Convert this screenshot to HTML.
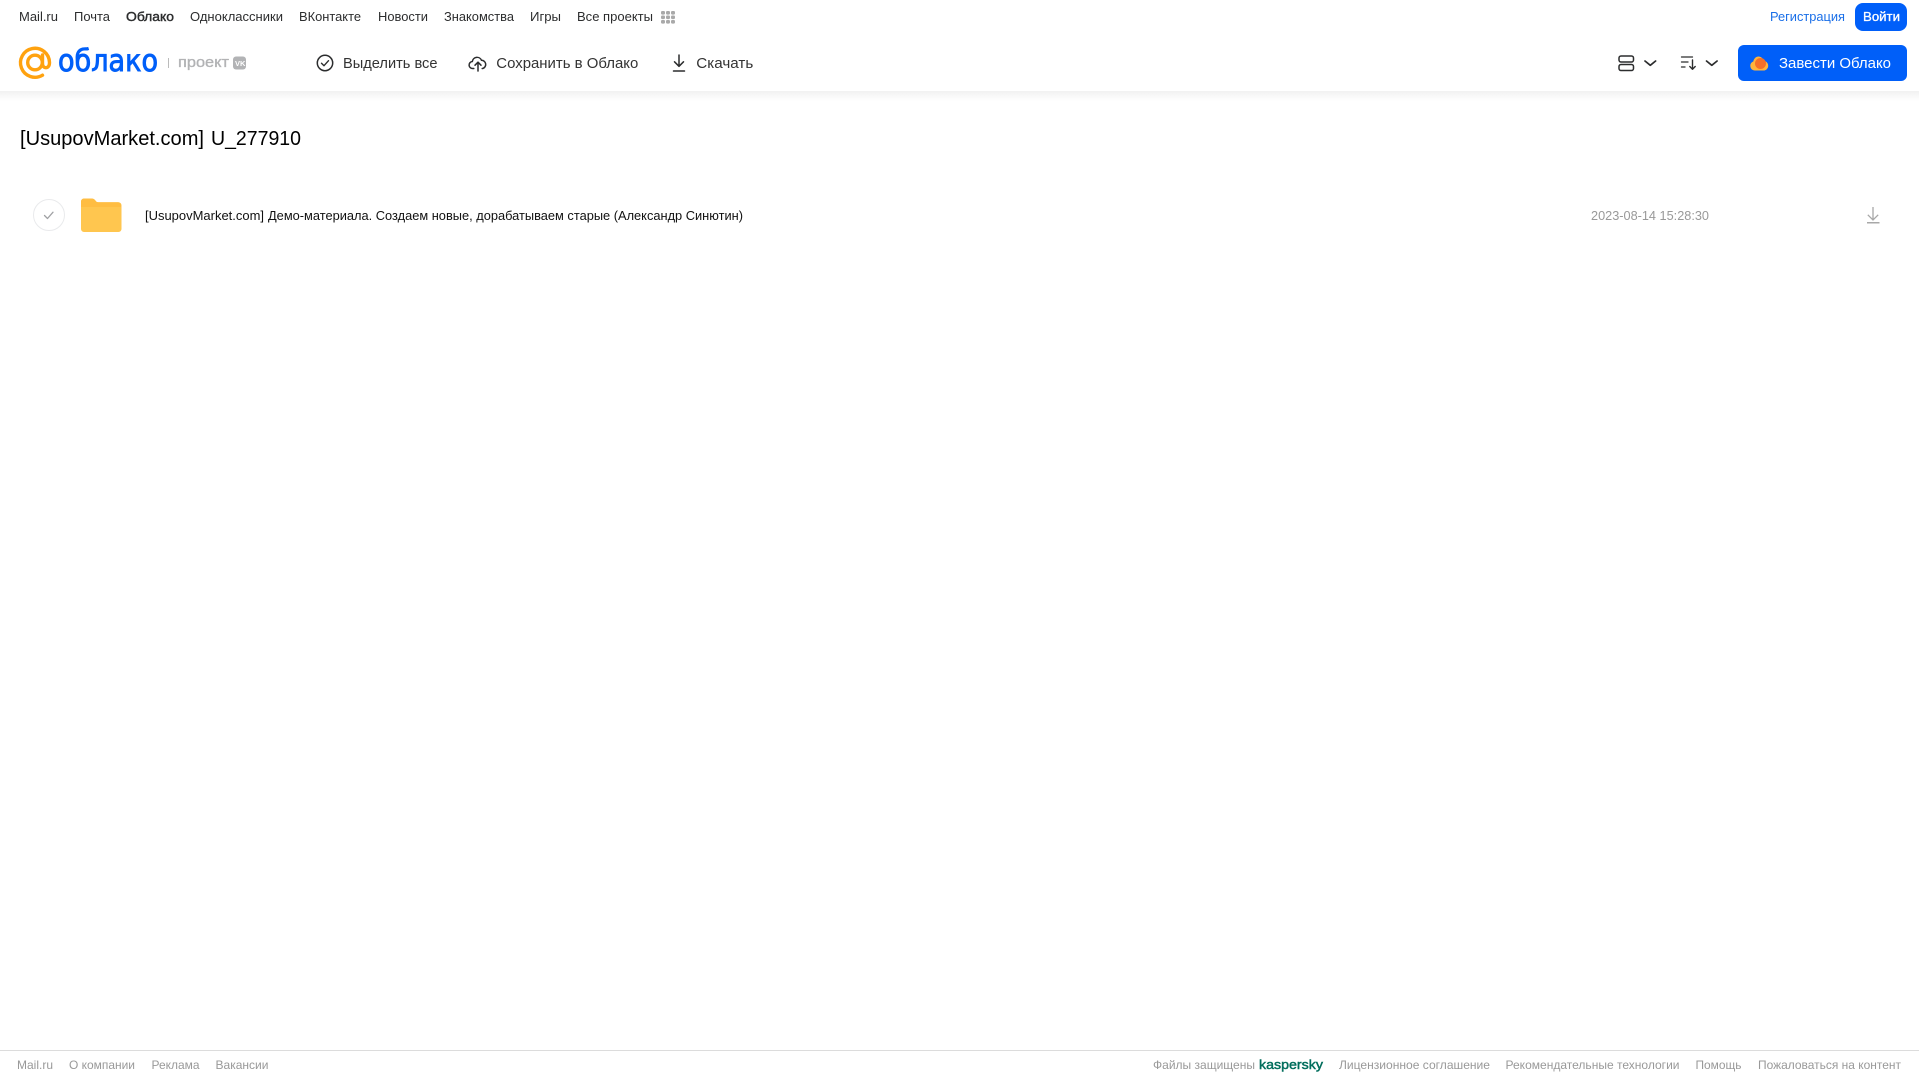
<!DOCTYPE html>
<html lang="ru"><head><meta charset="utf-8"><title>Облако</title>
<style>
html,body{margin:0;padding:0;background:#fff;width:1919px;height:1079px;overflow:hidden}
svg{display:block;position:absolute;left:0;top:0}
text{font-family:"Liberation Sans",sans-serif;fill:#2c2d2e}
.n{font-size:13px}
.t{font-size:15px;fill:#333}
.f{font-size:12px;fill:#999}
</style></head><body>
<svg width="1919" height="1079" viewBox="0 0 1919 1079" xmlns="http://www.w3.org/2000/svg">
<defs><linearGradient id="s" x1="0" y1="0" x2="0" y2="1"><stop offset="0" stop-color="#f1f1f1"/><stop offset="1" stop-color="#fff"/></linearGradient></defs>
<rect x="0" y="91" width="1919" height="10" fill="url(#s)"/>

<!-- top nav -->
<text class="n" x="19" y="21" textLength="39" lengthAdjust="spacingAndGlyphs">Mail.ru</text>
<text class="n" x="74" y="21" textLength="36" lengthAdjust="spacingAndGlyphs">Почта</text>
<text class="n" x="126" y="21" textLength="48" lengthAdjust="spacingAndGlyphs" style="stroke:#2c2d2e;stroke-width:.4">Облако</text>
<text class="n" x="190" y="21" textLength="93" lengthAdjust="spacingAndGlyphs">Одноклассники</text>
<text class="n" x="299" y="21" textLength="62" lengthAdjust="spacingAndGlyphs">ВКонтакте</text>
<text class="n" x="378" y="21" textLength="50" lengthAdjust="spacingAndGlyphs">Новости</text>
<text class="n" x="444" y="21" textLength="70" lengthAdjust="spacingAndGlyphs">Знакомства</text>
<text class="n" x="530" y="21" textLength="31" lengthAdjust="spacingAndGlyphs">Игры</text>
<text class="n" x="577" y="21" textLength="76" lengthAdjust="spacingAndGlyphs">Все проекты</text>
<g fill="#a9a9a9">
<rect x="661" y="11" width="4" height="3.6" rx="1.2"/><rect x="666" y="11" width="4" height="3.6" rx="1.2"/><rect x="671" y="11" width="4" height="3.6" rx="1.2"/>
<rect x="661" y="15.500" width="4" height="3.600" rx="1.200"/><rect x="666" y="15.500" width="4" height="3.600" rx="1.200"/><rect x="671" y="15.500" width="4" height="3.600" rx="1.200"/>
<rect x="661" y="20" width="4" height="3.600" rx="1.200"/><rect x="666" y="20" width="4" height="3.600" rx="1.200"/><rect x="671" y="20" width="4" height="3.600" rx="1.200"/>
</g>
<text class="n" x="1770" y="21" textLength="75" lengthAdjust="spacingAndGlyphs" style="fill:#1a6fe8">Регистрация</text>
<rect x="1855" y="3" width="52" height="28" rx="8" fill="#005ff9"/>
<text class="n" x="1863" y="21" textLength="37" lengthAdjust="spacingAndGlyphs" style="fill:#fff;stroke:#fff;stroke-width:.3">Войти</text>

<!-- logo -->
<circle cx="35" cy="62.500" r="7.300" fill="none" stroke="#ffa20f" stroke-width="3.400"/>
<path d="M42.500 75.200A14.500 14.500 0 1 1 49.500 62.500c0 3.500-1.600 5.200-3.600 5.200s-3.400-1.700-3.400-4.500V55" fill="none" stroke="#ffa20f" stroke-width="3.400" stroke-linecap="round" stroke-linejoin="round"/>
<text x="58" y="71" font-size="30" textLength="100" lengthAdjust="spacingAndGlyphs" style="fill:#005ff9;stroke:#005ff9;stroke-width:.9;font-family:'DejaVu Sans',sans-serif">облако</text>
<rect x="168" y="58" width="1" height="10" fill="#bbb"/>
<text x="178" y="67" font-size="15" textLength="51" lengthAdjust="spacingAndGlyphs" style="fill:#b2b3b5;stroke:#b2b3b5;stroke-width:.35">проект</text>
<rect x="233" y="56.500" width="13" height="13" rx="3" fill="#b2b3b5"/>
<text x="235" y="66" font-size="7.500" font-weight="bold" style="fill:#fff">VK</text>

<!-- toolbar -->
<circle cx="325" cy="63" r="7.700" fill="none" stroke="#2c2d2e" stroke-width="1.500"/>
<path d="M321.500 63.200l2.500 2.500 4.500-5" fill="none" stroke="#2c2d2e" stroke-width="1.400" stroke-linecap="round" stroke-linejoin="round"/>
<text class="t" x="343" y="68" textLength="94.500" lengthAdjust="spacingAndGlyphs">Выделить все</text>
<path d="M473.800 68.500h-.9a3.500 3.500 0 0 1-.6-7 4.800 4.800 0 0 1 9.200-1.200 4.200 4.200 0 0 1 1.300 8.200h-.6" fill="none" stroke="#2c2d2e" stroke-width="1.500" stroke-linecap="round" stroke-linejoin="round"/>
<path d="M478 71v-8.500M475 65.200l3-3 3 3" fill="none" stroke="#2c2d2e" stroke-width="1.500" stroke-linecap="round" stroke-linejoin="round"/>
<text class="t" x="496.300" y="68" textLength="142" lengthAdjust="spacingAndGlyphs">Сохранить в Облако</text>
<path d="M679 55v11M674.500 61.800l4.500 4.500 4.500-4.500M673.500 71h11" fill="none" stroke="#2c2d2e" stroke-width="1.500" stroke-linecap="round" stroke-linejoin="round"/>
<text class="t" x="696.300" y="68" textLength="57" lengthAdjust="spacingAndGlyphs">Скачать</text>

<!-- view / sort -->
<rect x="1619" y="56" width="14.500" height="6" rx="2" fill="none" stroke="#2c2d2e" stroke-width="1.500"/>
<rect x="1619" y="64.500" width="14.500" height="6" rx="2" fill="none" stroke="#2c2d2e" stroke-width="1.500"/>
<path d="M1645 61l5.300 4.300 5.300-4.300" fill="none" stroke="#2c2d2e" stroke-width="1.700" stroke-linecap="round" stroke-linejoin="round"/>
<path d="M1681.500 57h11M1681.500 62h6.500M1681.500 67h3.500" fill="none" stroke="#2c2d2e" stroke-width="1.300" stroke-linecap="round"/>
<path d="M1692.500 60v9M1689.800 66.500l2.700 2.800 2.700-2.800" fill="none" stroke="#2c2d2e" stroke-width="1.400" stroke-linecap="round" stroke-linejoin="round"/>
<path d="M1706.500 61l5.300 4.300 5.300-4.300" fill="none" stroke="#2c2d2e" stroke-width="1.700" stroke-linecap="round" stroke-linejoin="round"/>

<!-- CTA -->
<rect x="1738" y="45" width="169" height="36" rx="6" fill="#005ff9"/>
<path d="M1755 70.500c-3.200 0-4.700-2.300-4.700-4.700 0-2.100 1.400-3.800 3-4.300.6-3 2.700-5 5.200-5 2.500 0 4.500 1.800 5.100 4.400 2.700.2 4.600 2.200 4.600 4.800 0 2.600-2 4.800-4.600 4.800z" fill="#ffb43c"/>
<circle cx="1760.500" cy="63.500" r="5.500" fill="#f4702a"/>
<text class="t" x="1779" y="68" textLength="112" lengthAdjust="spacingAndGlyphs" style="fill:#fff">Завести Облако</text>

<!-- title -->
<text x="20" y="145" font-size="20.500" textLength="184" lengthAdjust="spacingAndGlyphs" style="fill:#000">[UsupovMarket.com]</text>
<text x="211" y="145" font-size="20.500" textLength="90" lengthAdjust="spacingAndGlyphs" style="fill:#000">U_277910</text>

<!-- row -->
<circle cx="49" cy="215" r="15.500" fill="#fff" stroke="#e9eaec" stroke-width="1"/>
<path d="M44.500 215.500l3 3 5.500-6.300" fill="none" stroke="#a0a1a4" stroke-width="1.300" stroke-linecap="round" stroke-linejoin="round"/>
<path d="M81 201.500a3 3 0 0 1 3-3h7.500c2 0 3 .8 4 2 .9 1.200 1.500 1.800 3.500 1.800h19.500a3 3 0 0 1 3 3V229a3 3 0 0 1-3 3H84a3 3 0 0 1-3-3z" fill="#ffc64f"/>
<path d="M81 207h40v-1.700a3 3 0 0 0-3-3H98.500c-2 0-2.600-.6-3.500-1.800-1-1.200-2-2-4-2H84a3 3 0 0 0-3 3z" fill="#ffbd42"/>
<text x="145" y="220" font-size="12.500" textLength="119" lengthAdjust="spacingAndGlyphs" style="fill:#111">[UsupovMarket.com]</text>
<text x="268" y="220" font-size="12.500" textLength="475" lengthAdjust="spacingAndGlyphs" style="fill:#111">Демо-материала. Создаем новые, дорабатываем старые (Александр Синютин)</text>
<text x="1591" y="220" font-size="12.500" textLength="118" lengthAdjust="spacingAndGlyphs" style="fill:#999">2023-08-14 15:28:30</text>
<path d="M1873 207v13M1867.800 214.800l5.200 5.200 5.200-5.200" fill="none" stroke="#a8a8a8" stroke-width="1.300"/>
<rect x="1867" y="222" width="12.500" height="1.500" fill="#a8a8a8"/>

<!-- footer -->
<rect x="0" y="1050" width="1919" height="1" fill="#dcdcdc"/>
<text class="f" x="17" y="1069" textLength="36" lengthAdjust="spacingAndGlyphs">Mail.ru</text>
<text class="f" x="69" y="1069" textLength="66" lengthAdjust="spacingAndGlyphs">О компании</text>
<text class="f" x="151.500" y="1069" textLength="48" lengthAdjust="spacingAndGlyphs">Реклама</text>
<text class="f" x="215.500" y="1069" textLength="53" lengthAdjust="spacingAndGlyphs">Вакансии</text>
<text class="f" x="1153" y="1069" textLength="102" lengthAdjust="spacingAndGlyphs">Файлы защищены</text>
<text class="f" x="1259" y="1069" textLength="64" lengthAdjust="spacingAndGlyphs" style="fill:#006d5c;stroke:#006d5c;stroke-width:.45;font-size:13px">kaspersky</text>
<text class="f" x="1339" y="1069" textLength="151" lengthAdjust="spacingAndGlyphs">Лицензионное соглашение</text>
<text class="f" x="1505.500" y="1069" textLength="174" lengthAdjust="spacingAndGlyphs">Рекомендательные технологии</text>
<text class="f" x="1695.500" y="1069" textLength="46" lengthAdjust="spacingAndGlyphs">Помощь</text>
<text class="f" x="1758" y="1069" textLength="143" lengthAdjust="spacingAndGlyphs">Пожаловаться на контент</text>
</svg>
</body></html>
